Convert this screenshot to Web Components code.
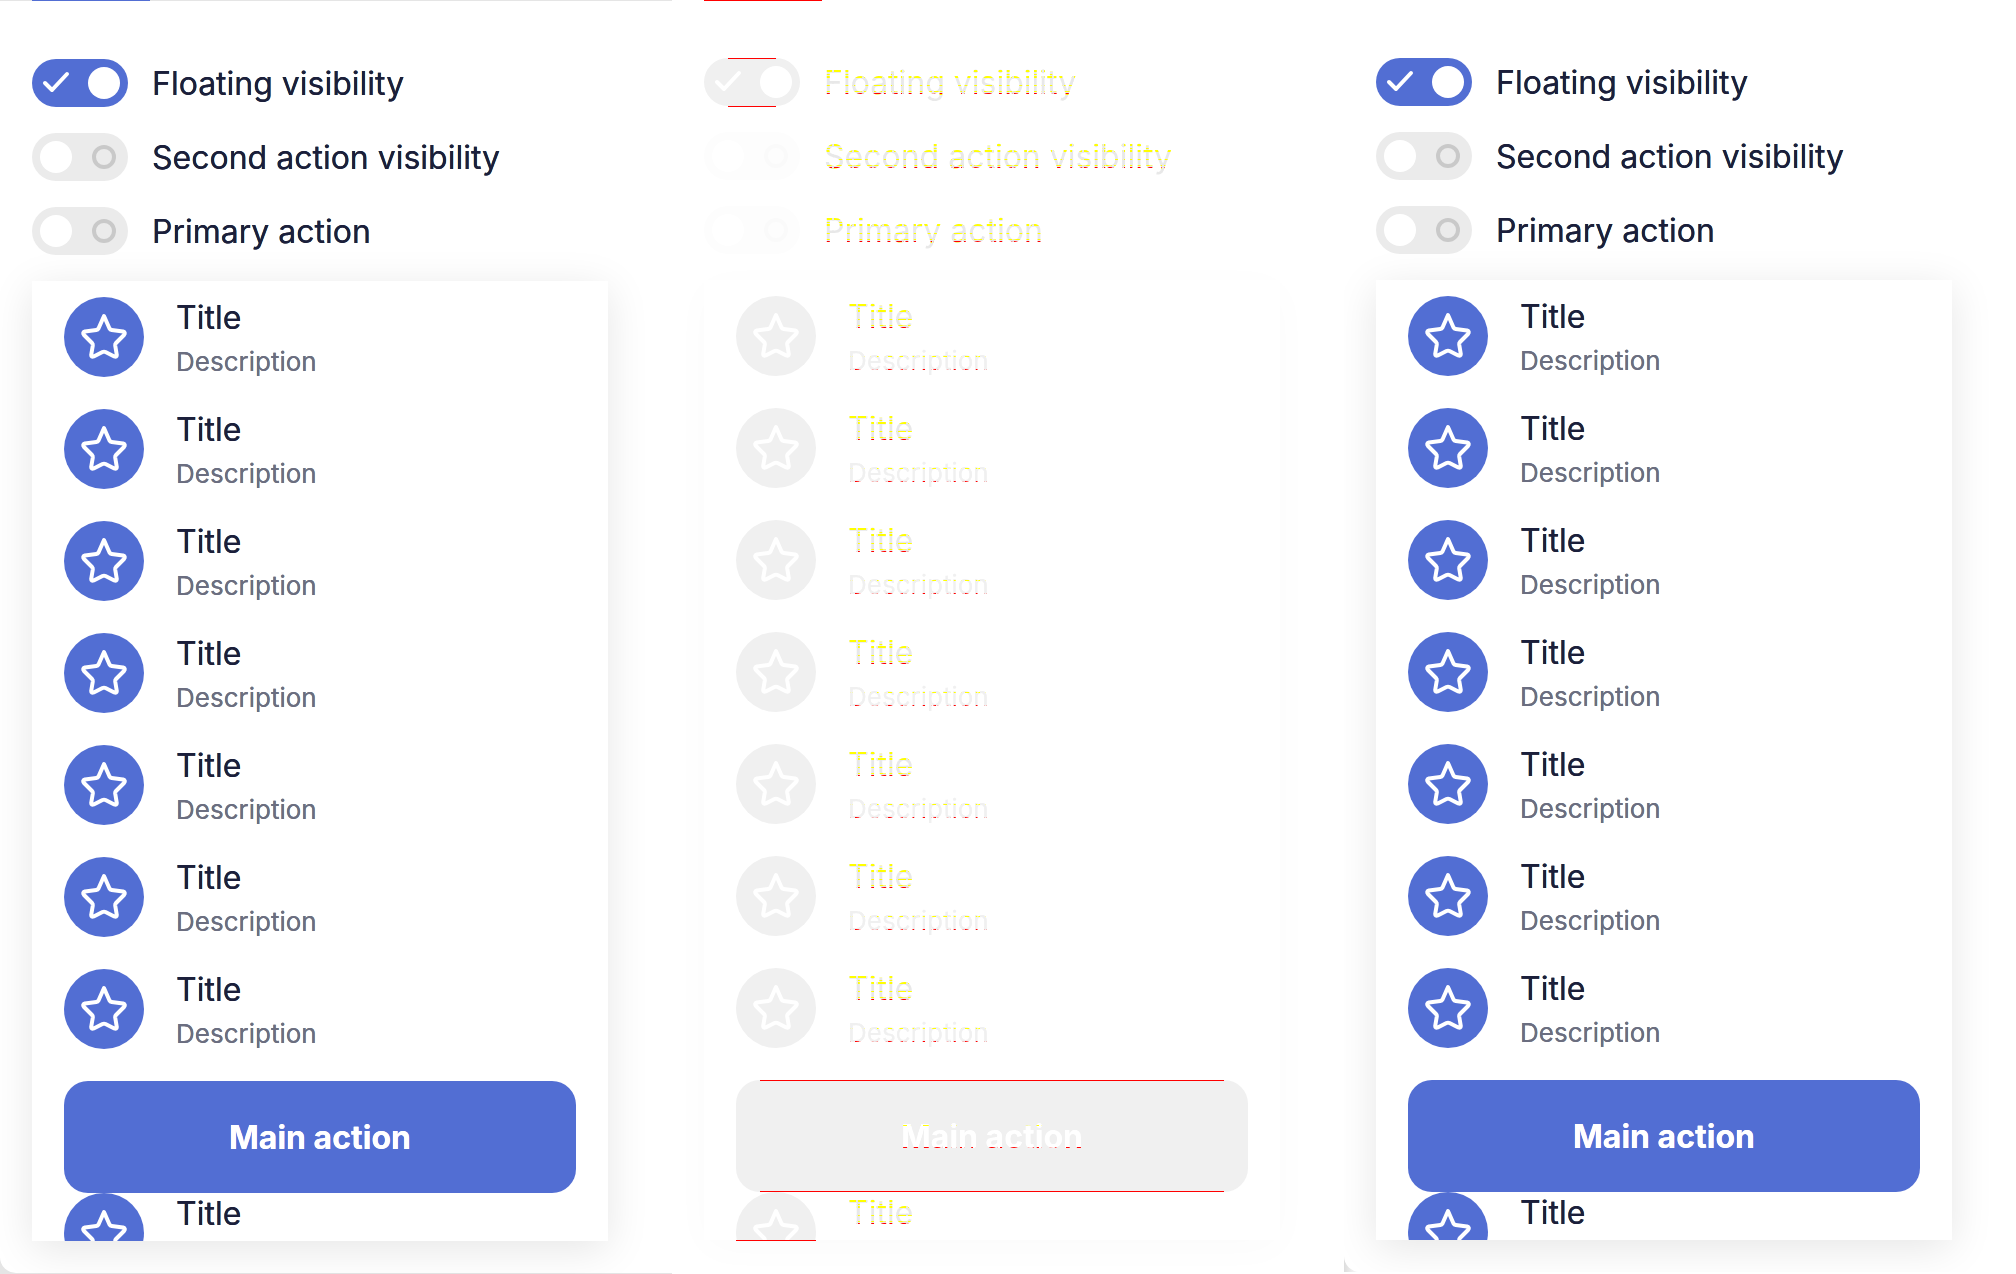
<!DOCTYPE html>
<html lang="en">
<head>
<meta charset="utf-8">
<title>Floating container</title>
<style>
html { background: #fff; }
body { margin: 0; font-family: Inter, "Liberation Sans", sans-serif; color: #1b1f3b; overflow-x: hidden; }
</style>
</head>
<body>
<comparison-view></comparison-view>
<script>
const define = (name, css, html) => {
  const template = document.createElement('template');
  template.innerHTML = `<style>*{box-sizing:border-box}${css}</style>${html}`;
  customElements.define(name, class extends HTMLElement {
    constructor() {
      super();
      this.attachShadow({ mode: 'open' }).append(template.content.cloneNode(true));
      const input = this.shadowRoot.querySelector('input');
      if (input) input.checked = this.hasAttribute('checked');
    }
  });
};

/* --ink paints the glyphs; --marks / --marks-soft / --marks-strong add changed-pixel rows over it. */
define('marked-text', `
  :host { display: block; }
  span { --ink: var(--text, #1b1f3b); display: inline-block; padding-top: 2px; color: var(--ink); font-size: 32px; line-height: 38px; white-space: nowrap;
    background: var(--marks, none), var(--ink); -webkit-background-clip: text; background-clip: text; -webkit-text-fill-color: var(--fill, currentColor); }
  :host([size="s"]) span { --ink: var(--text-soft, #6b6e80); font-size: 26px; line-height: 30px; background-image: var(--marks-soft, none); }
  :host([size="b"]) span { --ink: #fff; font-weight: 700; background-image: var(--marks-strong, none); }
`, `<span><slot></slot></span>`);

define('toggle-row', `
  :host { display: block; }
  label { display: flex; align-items: center; gap: 24px; height: 48px; }
  .track { display: grid; width: 96px; height: 48px; flex: none; }
  .track > * { grid-area: 1 / 1; margin: 0; width: 96px; height: 48px; }
  input { appearance: none; border-radius: 24px; background: var(--track-off, #ebebeb); }
  input:checked { background: var(--primary, #526ed3); }
  svg { pointer-events: none; overflow: visible; }
  .on { display: none; }
  .edge { fill: var(--edge, transparent); }
  input:checked ~ .on { display: block; }
  input:checked ~ .off { display: none; }
`, `<label><span class="track"><input type="checkbox" role="switch">
  <svg class="on" viewBox="0 0 96 48"><path class="edge" d="M24 0h48v1H24zM24 48h48v1H24z"/><circle cx="72" cy="24" r="16" fill="#fff"/><path d="M13 24l7 7 15-16" fill="none" stroke="#fff" stroke-width="4" stroke-linecap="round" stroke-linejoin="round"/></svg>
  <svg class="off" viewBox="0 0 96 48"><circle cx="24" cy="24" r="16" fill="#fff"/><circle cx="72" cy="24" r="10" fill="none" style="stroke:var(--ring, #c9c9c9)" stroke-width="4"/></svg>
  </span><marked-text><slot></slot></marked-text></label>`);

define('list-item', `
  :host { display: flex; align-items: flex-start; gap: 32px; height: 80px; flex: none; }
  .avatar { width: 80px; height: 80px; flex: none; border-radius: 50%; background: var(--primary, #526ed3); display: grid; place-items: center; }
  svg { width: 48px; height: 48px; }
  .copy { display: flex; flex-direction: column; gap: 8px; }
  marked-text { height: 40px; }
  :host([brief]) marked-text[size="s"] { display: none; }
`, `<div class="avatar"><svg viewBox="0 0 48 48"><path d="M24 4 L29.500 16.500 Q30.200 17.800 31.700 18 L43 19.500 Q46 20.500 44 23 L36 31 Q35 32 35.200 33.500 L36.800 43 Q36.800 45.500 34.300 44.500 L25.500 40 Q24 39.300 22.500 40 L13.700 44.500 Q11.200 45.500 11.200 43 L12.800 33.500 Q13 32 12 31 L4 23 Q2 20.500 5 19.500 L16.300 18 Q17.800 17.800 18.500 16.500 Z" transform="translate(0 -1)" fill="none" stroke="#fff" stroke-width="4" stroke-linejoin="round"/></svg></div>
  <div class="copy"><marked-text>Title</marked-text><marked-text size="s">Description</marked-text></div>`);

define('main-button', `
  :host { display: block; flex: none; }
  button { display: flex; align-items: center; justify-content: center; width: 100%; height: 112px; padding: 0; border: 0; border-radius: 24px; font: inherit;
    background: linear-gradient(var(--edge, transparent), var(--edge, transparent)) top / calc(100% - 48px) 1px no-repeat, linear-gradient(var(--edge, transparent), var(--edge, transparent)) bottom / calc(100% - 48px) 1px no-repeat, var(--primary, #526ed3); }
`, `<button type="button"><marked-text size="b"><slot></slot></marked-text></button>`);

define('scroll-card', `
  :host { display: flex; flex-direction: column; background: #fff; box-shadow: 0 8px 40px var(--shadow, rgba(0,0,0,.1)); }
  .view { display: flex; flex-direction: column; height: 960px; padding: 16px 32px 0; overflow: hidden; }
  .list { display: flex; flex-direction: column; gap: 32px; flex: none; }
  .cut { width: 80px; height: 1px; margin: 0 0 -1px 32px; background: var(--edge, transparent); }
`, `<div class="view"><div class="list">${'<list-item></list-item>'.repeat(7)}<main-button>Main action</main-button></div><list-item brief></list-item></div><div class="cut"></div>`);

define('demo-panel', `
  :host { display: flex; flex-direction: column; overflow: hidden; background: #fff; }
  :host([kind="before"]) { background: #e5e5e5; padding-bottom: 1px; }
  :host([kind="after"]) { background: linear-gradient(to right, #ddd, #fff 16px); }
  :host([kind="diff"]) {
    --primary: #f0f0f0; --track-off: #fdfdfd; --ring: #fafafa; --edge: #f00; --shadow: rgba(0,0,0,.02); --text: #e8e8e8; --text-soft: #f0f0f0; --fill: transparent;
    --marks: repeating-linear-gradient(90deg, transparent 0 8px, #e8e8e8 8px 10px), linear-gradient(transparent 8px, #ff0 8px 10px, transparent 10px 12px, #ff0 12px 13px, transparent 13px 14px, #ff0 14px 16px, transparent 16px 23px, #ff0 23px 24px, transparent 24px 29px, #ff0 29px 30px, transparent 30px 31px, #f00 31px 32px, #ff0 32px 33px, transparent 33px);
    --marks-soft: repeating-linear-gradient(90deg, #f0f0f0 0 7px, transparent 7px 11px), linear-gradient(transparent 12px, #ff0 12px 13px, transparent 13px 25px, #f00 25px 26px, transparent 26px);
    --marks-strong: repeating-linear-gradient(90deg, transparent 0 6px, #fff 6px 11px), linear-gradient(transparent 9px, #ff0 9px 10px, transparent 10px 31px, #f00 31px 32px, transparent 32px);
  }
  .tabs { display: none; height: 1px; padding-left: 32px; background: #e5e5e5; }
  .tabs i { width: 118px; height: 1px; background: #526ed3; }
  :host([kind="before"]) .tabs { display: flex; }
  :host([kind="diff"]) .tabs { display: flex; background: #fff; margin-bottom: -1px; z-index: 1; }
  :host([kind="diff"]) .tabs i { background: #f00; }
  main { background: #fff; border-bottom-left-radius: 16px; padding: 58px 64px 32px 32px; }
  .toggles { display: flex; flex-direction: column; gap: 26px; margin-bottom: 26px; }
`, `<div class="tabs"><i></i></div><main><div class="toggles">
  <toggle-row checked>Floating visibility</toggle-row><toggle-row>Second action visibility</toggle-row><toggle-row>Primary action</toggle-row></div>
  <scroll-card></scroll-card></main>`);

define('comparison-view', `
  :host { display: grid; grid-template-columns: repeat(3, minmax(0, 1fr)); align-items: start; }
`, `<demo-panel kind="before"></demo-panel><demo-panel kind="diff"></demo-panel><demo-panel kind="after"></demo-panel>`);
</script>
</body>
</html>
